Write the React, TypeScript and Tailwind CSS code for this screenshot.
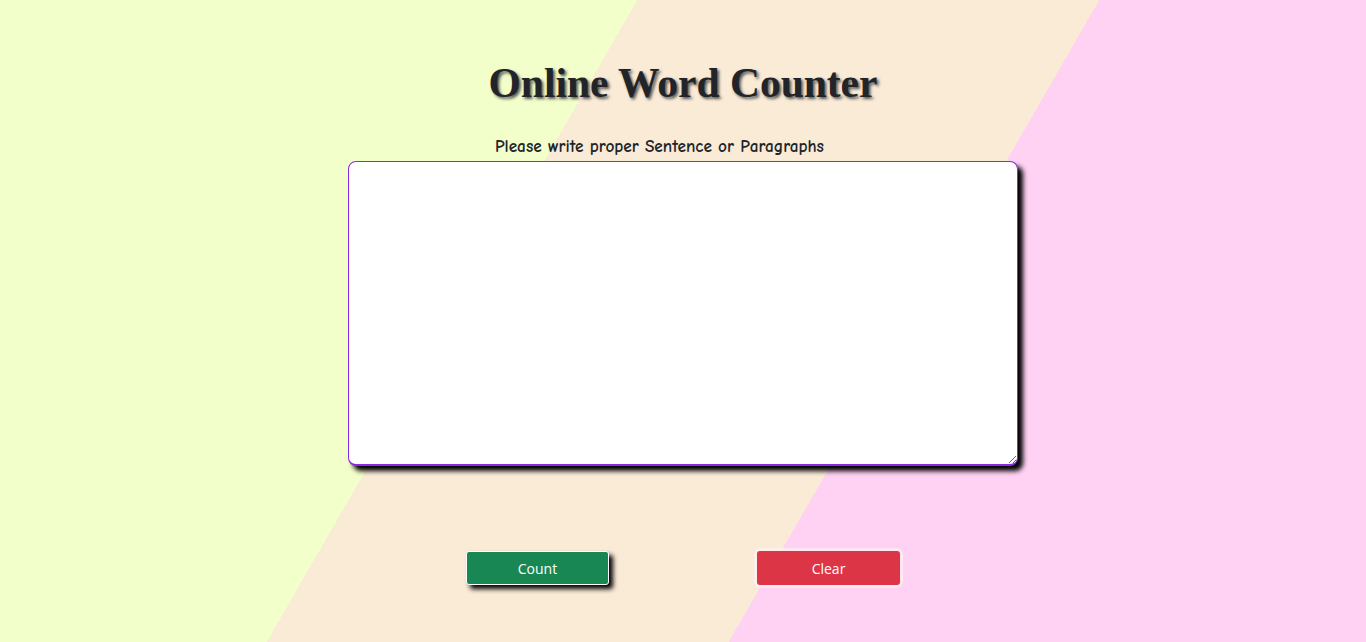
import React, { useState } from "react";

const App: React.FC = () => {
  const [text, setText] = useState("");

  return (
    <div className="min-h-[642px] w-full bg-[linear-gradient(120deg,#f3ffca_36.7%,#faebd7_36.7%,#faebd7_63.3%,#ffd1f3_63.3%)] flex flex-col items-center">
      {/* heading */}
      <h1 className="mt-[57px] text-[41.5px] leading-[52px] font-bold text-[#212529] font-['Liberation_Serif',serif] [text-shadow:2px_2px_3px_#555]">
        Online Word Counter
      </h1>

      <div className="mt-[27px] w-[670px] flex flex-col">
        <label
          htmlFor="words"
          className="ml-[147px] mb-[5px] text-[17.3px] leading-[20px] font-semibold text-[#212529] font-['Comic_Sans_MS','Comic_Neue','DejaVu_Sans',sans-serif]"
        >
          Please write proper Sentence or Paragraphs
        </label>
        <textarea
          id="words"
          value={text}
          onChange={(e) => setText(e.target.value)}
          className="h-[305px] w-[670px] bg-white border border-[#8a2be2] border-b-2 rounded-[8px] shadow-[5px_5px_5px_#000] outline-none p-2 resize"
        />
      </div>

      {/* buttons */}
      <div className="mt-[85px] flex gap-[148px] font-['Open_Sans','Noto_Sans',sans-serif]">
        <button className="w-[143px] h-[34px] bg-[#198754] text-white text-[14px] rounded-[3px] border border-white shadow-[4px_4px_5px_#000]">
          Count
        </button>
        <button className="w-[143px] h-[34px] bg-[#dc3545] text-white text-[14px] rounded-[3px] ring-[3px] ring-[#fff1f4]/70">
          Clear
        </button>
      </div>
    </div>
  );
};

export default App;
